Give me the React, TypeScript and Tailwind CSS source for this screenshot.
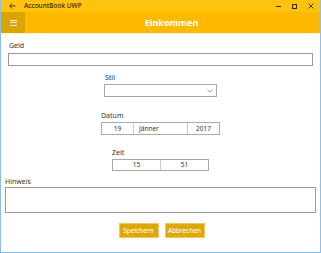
import React from 'react';

const FONT = { fontFamily: '"Noto Sans", "Open Sans", sans-serif' };

function Label({ children, className = '' }: { children: React.ReactNode; className?: string }) {
  return <div className={`text-[7px] leading-[9px] text-[#333] ${className}`}>{children}</div>;
}

export default function App() {
  return (
    <div style={FONT} className="w-[321px] h-[253px] bg-white border-x border-b border-[#8cc0ea] flex flex-col overflow-hidden">
      {/* title bar */}
      <div className="h-[12px] bg-[#ffc20e] flex items-center text-[#3a2a00]">
        <div className="w-[22px] flex justify-center text-[7px] leading-none">
          <svg width="7" height="6" viewBox="0 0 7 6"><path d="M3 0.5L0.8 3L3 5.5M0.8 3H6.5" stroke="#3a2a00" strokeWidth="0.9" fill="none" /></svg>
        </div>
        <div className="text-[6.5px] leading-none ml-[1px] font-medium">AccountBook UWP</div>
        <div className="ml-auto flex items-center h-full">
          <div className="w-[16px] flex justify-center"><div className="w-[5px] h-px bg-[#3a2a00]" /></div>
          <div className="w-[16px] flex justify-center"><div className="w-[5px] h-[5px] border border-[#3a2a00]" /></div>
          <div className="w-[18px] flex justify-center">
            <svg width="6" height="6" viewBox="0 0 6 6"><path d="M0.5 0.5L5.5 5.5M5.5 0.5L0.5 5.5" stroke="#3a2a00" strokeWidth="0.9" /></svg>
          </div>
        </div>
      </div>
      {/* header */}
      <div className="h-[21px] bg-[#ffb900] flex items-center">
        <div className="w-[24px] h-full bg-[#dba400] flex flex-col items-center justify-center gap-[1.5px]">
          <div className="w-[7px] h-px bg-white/80" />
          <div className="w-[7px] h-px bg-white/80" />
          <div className="w-[7px] h-px bg-white/80" />
        </div>
        <div className="flex-1 text-center text-white font-bold text-[9px] leading-none -ml-[2px]">Einkommen</div>
      </div>
      <div className="h-px bg-[#fff3cf]" />
      {/* form */}
      <div className="flex flex-col">
        <Label className="ml-[8px] mt-[7px]">Geld</Label>
        <div className="ml-[7px] mt-[3px] w-[305px] h-[13px] border border-[#999]" />

        <Label className="ml-[104px] mt-[7px]">Stil</Label>
        <div className="ml-[103px] mt-[2px] w-[113px] h-[13px] border border-[#aaa] flex items-center justify-end pr-[3px]">
          <svg width="6" height="4" viewBox="0 0 6 4"><path d="M0.5 0.8L3 3.2L5.5 0.8" stroke="#666" strokeWidth="0.7" fill="none" /></svg>
        </div>

        <Label className="ml-[100px] mt-[14px]">Datum</Label>
        <div className="ml-[100px] mt-[2px] w-[119px] h-[13px] border border-[#aaa] flex text-[6.5px] text-[#333]">
          <div className="w-[32px] border-r border-[#ccc] flex items-center justify-center">19</div>
          <div className="w-[54px] border-r border-[#ccc] flex items-center pl-[5px]">Jänner</div>
          <div className="flex-1 flex items-center justify-center">2017</div>
        </div>

        <Label className="ml-[111px] mt-[13px]">Zeit</Label>
        <div className="ml-[111px] mt-[2px] w-[97px] h-[12px] border border-[#aaa] flex text-[6.5px] text-[#333]">
          <div className="w-[48px] border-r border-[#ccc] flex items-center justify-center">15</div>
          <div className="flex-1 flex items-center justify-center">51</div>
        </div>

        <Label className="ml-[4px] mt-[6px]">Hinweis</Label>
        <div className="ml-[4px] mt-[1px] w-[311px] h-[26px] border border-[#999]" />

        <div className="mt-[10px] flex justify-center gap-[6px] pl-[2px]">
          <button className="w-[40px] h-[15px] bg-[#dfa80a] text-white text-[6.5px] border border-[#f0c860]">Speichern</button>
          <button className="w-[40px] h-[15px] bg-[#dfa80a] text-white text-[6.5px] border border-[#f0c860]">Abbrechen</button>
        </div>
      </div>
    </div>
  );
}
